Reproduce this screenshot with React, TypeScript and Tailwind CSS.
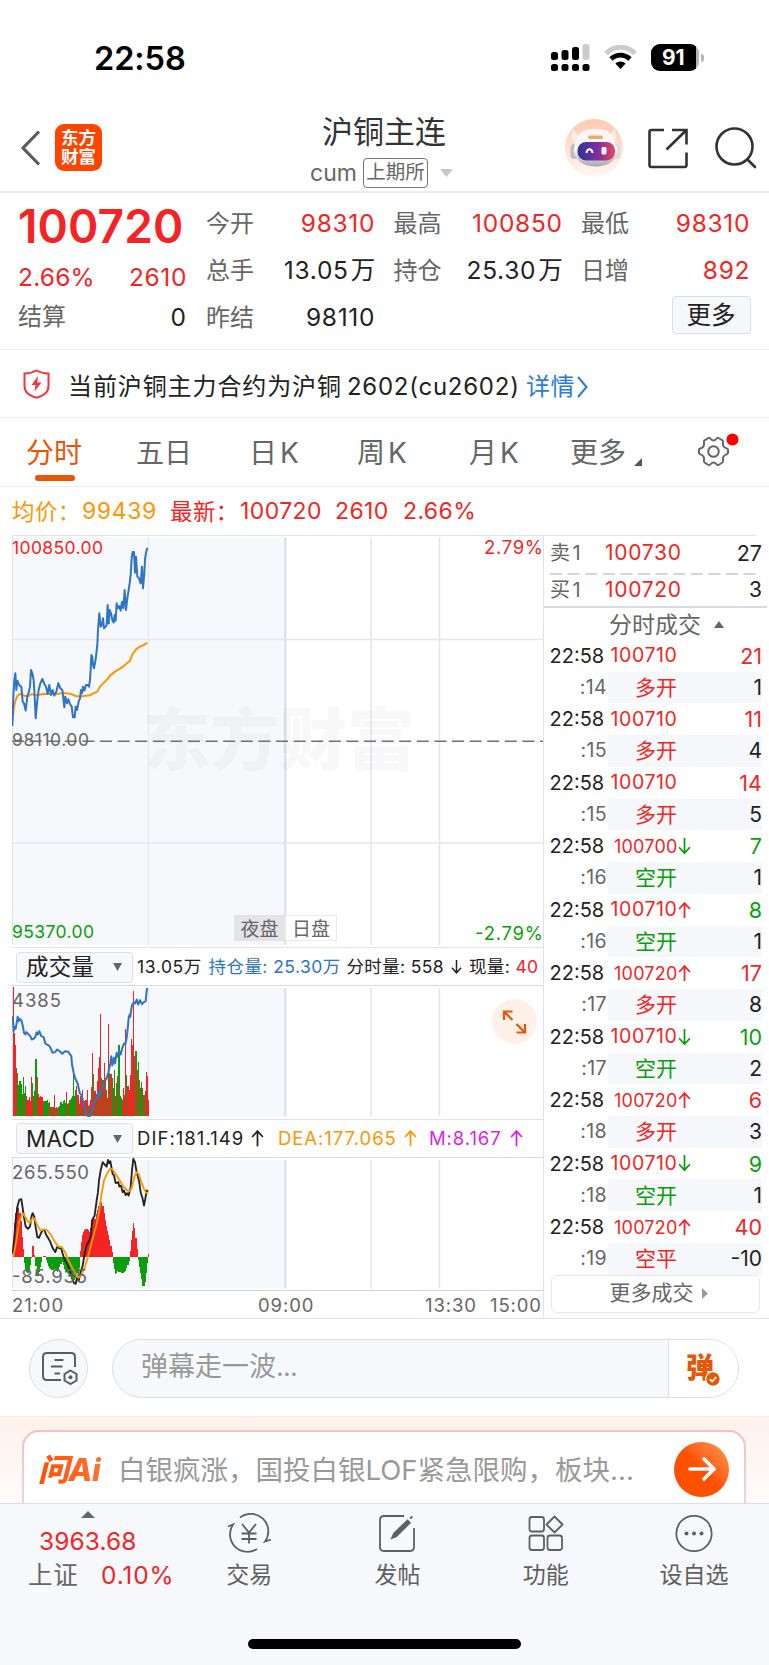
import React from 'react';

const RED = '#f52323';
const GREEN = '#0a9f0a';
const BLUE = '#2f74c5';
const ORANGE = '#ff9500';

interface Tick {
  price: string;
  arrow?: 'up' | 'down';
  small?: boolean;
  volume: number;
  side: 'up' | 'down';
  sec: string;
  kind: string;
  kindUp: boolean;
  delta: number;
}

const ticks: Tick[] = [
  { price: '100710', volume: 21, side: 'up', sec: ':14', kind: '多开', kindUp: true, delta: 1 },
  { price: '100710', volume: 11, side: 'up', sec: ':15', kind: '多开', kindUp: true, delta: 4 },
  { price: '100710', volume: 14, side: 'up', sec: ':15', kind: '多开', kindUp: true, delta: 5 },
  { price: '100700', arrow: 'down', small: true, volume: 7, side: 'down', sec: ':16', kind: '空开', kindUp: false, delta: 1 },
  { price: '100710', arrow: 'up', volume: 8, side: 'down', sec: ':16', kind: '空开', kindUp: false, delta: 1 },
  { price: '100720', arrow: 'up', small: true, volume: 17, side: 'up', sec: ':17', kind: '多开', kindUp: true, delta: 8 },
  { price: '100710', arrow: 'down', volume: 10, side: 'down', sec: ':17', kind: '空开', kindUp: false, delta: 2 },
  { price: '100720', arrow: 'up', small: true, volume: 6, side: 'up', sec: ':18', kind: '多开', kindUp: true, delta: 3 },
  { price: '100710', arrow: 'down', volume: 9, side: 'down', sec: ':18', kind: '空开', kindUp: false, delta: 1 },
  { price: '100720', arrow: 'up', small: true, volume: 40, side: 'up', sec: ':19', kind: '空平', kindUp: true, delta: -10 },
];

const quoteColumns = [
  [
    { label: '今开', value: '98310', red: true },
    { label: '总手', value: '13.05', unit: '万' },
    { label: '昨结', value: '98110' },
  ],
  [
    { label: '最高', value: '100850', red: true },
    { label: '持仓', value: '25.30', unit: '万' },
  ],
  [
    { label: '最低', value: '98310', red: true },
    { label: '日增', value: '892', red: true },
  ],
];

// Line data is kept at three units per pixel
const PRICE_LINE =
  '37,588 40,500 43,450 46,430 49,480 52,452 56,462 60,468 64,470 68,515 72,520 77,542 82,500 86,488 90,470 93,420 97,430 101,450 104,500 107,565 112,510 116,480 121,460 127,447 133,462 138,470 143,492 148,465 153,495 158,480 163,497 169,485 175,460 181,475 187,480 190,505 193,532 196,500 201,520 205,508 210,522 215,530 219,562 224,562 227,530 231,540 236,515 240,505 243,480 246,490 249,470 253,482 258,465 263,465 267,470 270,450 272,420 274,375 277,380 279,405 282,415 287,388 292,345 294,300 298,250 302,290 306,285 309,265 312,295 317,290 320,285 323,225 326,280 329,240 333,250 337,270 341,278 344,255 347,272 350,220 353,235 358,228 362,242 366,215 370,235 374,180 378,240 382,205 386,180 389,160 392,135 395,85 398,66 402,66 405,128 408,80 412,140 417,145 422,160 426,110 429,175 433,130 435,90 438,68 442,53';
const AVG_LINE =
  '37,575 42,530 47,510 53,497 60,492 68,495 76,498 85,498 95,492 105,495 115,495 130,492 150,491 170,492 190,489 210,491 220,495 230,499 245,499 270,496 280,490 292,485 300,470 312,458 322,448 330,437 345,425 365,413 378,402 390,392 398,372 408,358 420,350 432,345 442,338';
const HOLD_LINE =
  '38,230 41,275 44,262 47,268 50,250 53,232 56,245 60,238 65,245 69,262 72,280 76,285 79,278 86,285 91,290 95,300 101,298 106,292 110,278 114,285 118,275 124,290 131,293 136,312 143,316 150,322 158,340 165,338 172,330 180,336 187,343 195,335 205,337 210,345 214,350 216,375 221,400 226,418 233,432 239,460 245,468 250,488 255,510 259,528 270,530 277,510 284,488 289,478 295,458 299,470 305,448 312,430 319,418 325,400 331,372 334,350 337,378 342,355 345,372 350,340 353,352 358,335 362,345 367,325 372,312 376,315 380,295 383,270 386,235 389,225 391,232 394,208 397,195 402,188 406,192 410,180 415,195 420,182 426,194 432,188 437,185 440,155 442,145';
const DIF_LINE =
  '38,400 42,360 47,300 53,255 58,238 64,236 68,262 72,290 77,318 84,325 90,318 95,285 98,278 103,290 107,320 112,350 117,352 122,340 127,330 133,328 138,342 144,352 150,362 156,378 161,388 166,395 171,380 178,383 184,385 188,400 195,420 202,430 210,450 216,472 222,488 227,490 231,472 236,482 242,455 248,435 254,400 260,375 268,360 273,345 276,300 284,285 290,240 294,215 297,180 302,150 308,125 314,132 320,138 324,118 327,128 331,122 338,160 342,165 347,188 355,185 358,198 363,195 368,215 372,210 377,224 382,218 386,225 392,200 396,150 400,115 405,125 410,155 417,180 422,215 428,235 432,255 436,235 440,210 444,213';
const DEA_LINE =
  '40,408 50,355 57,305 64,288 70,280 76,290 83,302 90,307 98,292 104,295 112,315 122,330 132,327 142,330 152,342 165,365 175,378 186,380 195,395 205,420 218,445 228,462 235,472 245,462 256,435 268,395 278,355 290,310 298,270 304,225 312,180 322,158 330,145 336,145 345,158 358,178 370,198 382,210 390,212 396,200 403,170 410,155 416,160 424,185 432,205 438,217 444,217';

// One bar per minute, negative = green
const volumes = [
  387, 250, 215, -145, 130, -95, -107, -97, 68, -117, -70, -90, 62, 50, 58, 47, 119, -100, 62, -75,
  -172, 119, 68, 58, 60, 58, 58, -45, -45, -45, -48, 40, -42, -28, 27, 27, 64, -25, -27, 26,
  28, -30, -42, -36, -45, -48, -40, 74, -38, 40, -48, -55, -60, -132, -60, -80, 92, 65, -38, 62,
  55, 80, -50, 45, 50, 78, -30, 33, 50, 88, 190, -128, 75, -68, 105, 145, 178, 308, -115, 110,
  160, -115, 80, 55, 278, -130, 128, -115, -85, -140, 60, -100, 120, -215, -60, -55, 50, 85, 65, 263,
  -125, 90, 80, 125, 232, 215, 376, 180, -195, 140, -162, 110, -85, -102, 85, -65, 75, 133, 122, 50,
];

const macdKeys = [
  [38, 0], [44, 120], [50, 150], [58, 145], [63, 115], [67, 60], [72, 5], [74, -20], [78, -42], [86, -50], [92, -20], [95, 0],
  [97, 30], [99, 40], [102, 28], [105, 0], [108, -30], [113, -66], [118, -45], [126, -10], [130, 4], [136, 3], [139, -12],
  [148, -32], [156, -40], [165, -35], [172, -48], [180, -28], [187, -14], [194, -40], [205, -50], [214, -56], [222, -72], [230, -60], [237, -40],
  [241, 20], [247, 65], [254, 80], [262, 84], [269, 72], [277, 118], [284, 110], [292, 140], [301, 170], [308, 160], [315, 115],
  [322, 80], [330, 50], [337, 12], [340, -20], [347, -54], [354, -42], [362, -48], [368, -50], [378, -42], [387, -18], [390, 10],
  [396, 65], [402, 108], [407, 65], [413, 8], [416, -20], [422, -50], [430, -95], [436, -72], [442, -20], [445, 8],
];

function macdAt(x: number) {
  for (let i = 1; i < macdKeys.length; i++) {
    const [x0, v0] = macdKeys[i - 1];
    const [x1, v1] = macdKeys[i];
    if (x <= x1) return v0 + ((v1 - v0) * (x - x0)) / (x1 - x0);
  }
  return 8;
}

const Grid: React.FC<{ h: number }> = ({ h }) => (
  <>
    <rect x="0" y="2.5" width="273" height={h - 2.5} fill="#f7f8fb" />
    <path d={`M.5 0V${h}`} stroke="#dfe2eb" />
    <path d={`M136.5 2.5V${h}`} stroke="#e3e6ee" />
    <path d={`M273.3 2.5V${h}`} stroke="#dadde7" strokeWidth="2" />
    <path d={`M359 2.5V${h}M427.5 2.5V${h}`} stroke="#e3e6ee" strokeWidth="1.6" />
  </>
);

const PriceChart = () => (
  <svg width="531" height="409" viewBox="0 1 531 409" className="block">
    <Grid h={410} />
    <path d="M0 104.5H531M0 308H531" stroke="#e3e6ee" strokeWidth="1.5" />
    <text x="131" y="230" fontSize="68" fontWeight="900" textLength="272" fill="#000" opacity=".025">东方财富</text>
    <path d="M0 206.3H531" stroke="#707070" strokeWidth="1.4" strokeDasharray="12 5.6" />
    <g transform="translate(-12 -5) scale(.3333)" fill="none" strokeWidth="6" strokeLinejoin="round">
      <polyline points={AVG_LINE} stroke={ORANGE} />
      <polyline points={PRICE_LINE} stroke={BLUE} />
    </g>
    <text x="0" y="18.5" fontSize="17.5" textLength="91" fill={RED}>100850.00</text>
    <text x="0" y="210.5" fontSize="17.5" textLength="77" fill="#666">98110.00</text>
    <text x="0" y="403" fontSize="17.5" textLength="82" fill={GREEN}>95370.00</text>
    <text x="531" y="18.5" fontSize="18.5" textAnchor="end" textLength="59" fill={RED}>2.79%</text>
    <text x="531" y="404.5" fontSize="18.5" textAnchor="end" textLength="68" fill={GREEN}>-2.79%</text>
    <rect x="222" y="380" width="51" height="26" fill="#e4e4e6" />
    <rect x="273.5" y="380.5" width="51" height="25" fill="#fff" stroke="#ececec" />
    <text x="228.500" y="401" fontSize="19" fill="#666">夜盘</text>
    <text x="280" y="401" fontSize="19" fill="#666">日盘</text>
  </svg>
);

const VolumeChart = () => (
  <svg width="531" height="131" viewBox="0 .5 531 131" className="block">
    <Grid h={131} />
    <g transform="translate(-12 -46) scale(.3333)">
      {volumes.map((v, i) => (
        <rect key={i} x={38 + i * 3.41} y={531 - Math.abs(v)} width="3.41" height={Math.abs(v)} fill={v > 0 ? RED : GREEN} shapeRendering="crispEdges" />
      ))}
      <polyline points={HOLD_LINE} fill="none" stroke={BLUE} strokeWidth="6" strokeLinejoin="round" />
    </g>
    <text x="0" y="21" fontSize="18.500" textLength="49" fill="#666">4385</text>
    <circle cx="502.500" cy="36" r="22.500" fill="#fff1ea" />
    <path d="M492 34.500V26H500.500M492.300 26.300L500.500 34.500M504.500 47H513V38.500M512.700 46.700L504.500 38.500" fill="none" stroke="#ea5504" strokeWidth="2.200" />
  </svg>
);

const MacdChart = () => (
  <svg width="531" height="131" viewBox="0 .5 531 131" className="block">
    <Grid h={131} />
    <g transform="translate(-12 -37) scale(.3333)" fill="none" strokeLinejoin="round">
      {Array.from({ length: 120 }, (_, i) => {
        const x = 38 + i * 3.41;
        const v = macdAt(x + 1.7);
        return <rect key={i} x={x} y={v > 0 ? 409 - v : 409} width="3.41" height={Math.abs(v)} fill={v > 0 ? RED : GREEN} shapeRendering="crispEdges" />;
      })}
      <polyline points={DIF_LINE} stroke="#222" strokeWidth="5.500" />
      <polyline points={DEA_LINE} stroke={ORANGE} strokeWidth="5.500" />
    </g>
    <text x="0" y="21" fontSize="18.500" textLength="77" fill="#666">265.550</text>
    <text x="0" y="125" fontSize="18.500" textLength="75" fill="#666">-85.935</text>
  </svg>
);

const Arrow: React.FC<{ dir: 'up' | 'down'; size?: number }> = ({ dir, size = 13 }) => (
  <svg width={size} height={size * 1.25} viewBox="0 0 12 15" fill="none" stroke="currentColor" strokeWidth="1.6" className="shrink-0">
    {dir === 'up' ? <path d="M6 15V1M1 6.500L6 1L11 6.500" /> : <path d="M6 0V14M1 8.500L6 14L11 8.500" />}
  </svg>
);

const Selector: React.FC<{ label: string }> = ({ label }) => (
  <div className="flex h-[31px] w-[117px] shrink-0 items-center justify-between rounded border border-[#dcdfe8] bg-[#f7f8fb] pl-[9px] pr-2.5 text-[22.5px] tracking-[0.3px] text-[#222]">
    {label}
    <svg width="9" height="8" viewBox="0 0 9 8"><path d="M0 0H9L4.500 8Z" fill="#666" /></svg>
  </div>
);

const StatusBar = () => (
  <div className="flex h-[100px] items-start pl-[94px] pt-[38px] text-black">
    <div className="w-[457px] text-[32.5px] font-semibold leading-[41px] tracking-[-0.1px]">22:58</div>
    <svg width="39" height="28" viewBox="0 0 39 28" className="mt-1.5">
      <rect x="0" y="8" width="7" height="8" rx="2.500" />
      <rect x="10.500" y="6" width="7" height="10" rx="2.500" />
      <rect x="21" y="3" width="7" height="13" rx="2.500" />
      <rect x="31.500" y="0" width="7" height="16" rx="2.500" fill="#cbcbcb" />
      {[0, 10.5, 21, 31.5].map(x => <rect key={x} x={x} y="20" width="7" height="7" rx="2.500" />)}
    </svg>
    <svg width="33" height="25" viewBox="0 0 33 25" className="ml-3.5 mt-[7px]" fill="none">
      <path d="M2 8.500C10 .2 23 .2 31 8.500" stroke="#cbcbcb" strokeWidth="5" />
      <path d="M7 14C12.500 8.800 20.500 8.800 26 14" stroke="#000" strokeWidth="4.800" />
      <path d="M16.500 24L11.300 18.500C14 15.800 19 15.800 21.700 18.500Z" fill="#000" />
    </svg>
    <div className="ml-3.5 mt-1.5 flex h-[27px] w-[48px] items-center overflow-hidden rounded-[9px] bg-[#b5b5b5]">
      <div className="h-full w-[44.5px] bg-black text-center text-[21px] font-bold leading-[27px] text-white">91</div>
    </div>
    <div className="ml-[2px] mt-4 h-2 w-[3px] rounded-r-full bg-[#b5b5b5]" />
  </div>
);

const Robot = () => (
  <svg width="58" height="58" viewBox="0 0 58 58" className="mt-[19px]">
    <defs>
      <linearGradient id="halo" x1="0" y1="0" x2="0" y2="1">
        <stop offset="0" stopColor="#ffc9ae" />
        <stop offset="1" stopColor="#fff8f4" />
      </linearGradient>
      <linearGradient id="shell" x1="0" y1="0" x2="0" y2="1">
        <stop offset=".55" stopColor="#f8f6f7" />
        <stop offset="1" stopColor="#a9a7b4" />
      </linearGradient>
      <linearGradient id="visor" x1="0" y1="0" x2="1" y2="0">
        <stop offset="0" stopColor="#2b3597" />
        <stop offset=".55" stopColor="#7e2f9e" />
        <stop offset="1" stopColor="#e8485c" />
      </linearGradient>
    </defs>
    <circle cx="29" cy="29" r="29" fill="url(#halo)" />
    <path d="M13 17L8 10L6.500 19L9.500 24ZM44 17L50 10L51 19L48 24Z" fill="#f1eeee" />
    <rect x="5.500" y="25" width="8" height="15" rx="4" fill="#bdbac4" />
    <rect x="47" y="25" width="8" height="15" rx="4" fill="#dcdae0" />
    <path d="M30 10C41 10 47 13 49 21L53 31C53 41 43 47.500 31 47.500C18 47.500 9 41 8.500 31L11 21C14 13 20 10 30 10Z" fill="url(#shell)" />
    <rect x="23" y="16.500" width="15" height="3.500" rx="1.700" fill="#f0a76c" />
    <rect x="12.500" y="23" width="37.500" height="18.500" rx="8.500" fill="url(#visor)" />
    <path d="M21.500 34C22 29 27 29 27.500 34" fill="none" stroke="#fff" strokeWidth="2" />
    <rect x="36.500" y="28" width="5" height="7.500" rx="1.500" fill="#fff" />
  </svg>
);

const Header = () => (
  <div className="flex h-[93px] items-start border-b-2 border-[#ededed]">
    <svg width="20" height="36" viewBox="0 0 20 36" fill="none" stroke="#5c5c5c" strokeWidth="3.200" className="ml-[20px] mt-[30px]">
      <path d="M19 1.500L3 18L19 34.500" />
    </svg>
    <div className="ml-[15px] mt-6 flex h-[47px] w-[47px] flex-col items-center justify-center rounded-[9px] bg-[#ff4400] text-[17.5px] font-bold leading-[18.5px] text-white">
      <span>东方</span>
      <span>财富</span>
    </div>
    <div className="ml-[196px] flex w-[172px] flex-col items-center">
      <div className="mt-3 text-[31px] leading-[40px] text-[#333]">沪铜主连</div>
      <div className="-ml-1 mt-1.5 flex w-[144px] items-center text-[#666]">
        <span className="w-[53px] text-[23px] leading-[30px]">cum</span>
        <span className="h-[30px] w-[65px] rounded border-[1.5px] border-[#777] text-center text-[19.5px] leading-[27px]">上期所</span>
        <svg width="13" height="8" viewBox="0 0 13 8" className="ml-3"><path d="M0 0H13L6.500 8Z" fill="#c8c8c8" /></svg>
      </div>
    </div>
    <div className="ml-[95px]"><Robot /></div>
    <svg width="42" height="42" viewBox="0 0 42 42" fill="none" stroke="#333" strokeWidth="2.600" className="ml-6 mt-[27px]">
      <path d="M17 3H4.500Q2.500 3 2.500 5V38Q2.500 40 4.500 40H37.500Q39.500 40 39.500 38V25.500M25 3H39.500V17.500M39.500 3L19.500 22.500" />
    </svg>
    <svg width="42" height="43" viewBox="0 0 42 43" fill="none" stroke="#333" strokeWidth="2.600" strokeLinecap="round" className="ml-[26px] mt-[26px]">
      <circle cx="19.500" cy="20.500" r="18" />
      <path d="M32.500 33.500L40 41" />
    </svg>
  </div>
);

const Quote = () => (
  <div className="flex h-[157px] border-b-[1.5px] border-[#ebebed] pl-[18px] pt-[7px] text-[24.5px]">
    <div className="w-[168px] text-[#f52323]">
      <div className="h-[54px] text-[46px] font-semibold leading-[53px] tracking-[0.1px]">100720</div>
      <div className="flex h-[46px] justify-between leading-[46px]">
        <span className="tracking-[0.2px]">2.66%</span>
        <span className="-mr-px tracking-[0.6px]">2610</span>
      </div>
      <div className="flex h-[34px] justify-between leading-[34px]">
        <span className="text-[24px] text-[#666]">结算</span>
        <span className="text-[#222]">0</span>
      </div>
    </div>
    {quoteColumns.map((col, i) => (
      <div key={i} className={`w-[168.500px] ${i === 0 ? 'ml-[20px]' : 'ml-[19px]'}`}>
        {col.map(q => (
          <div key={q.label} className="flex h-[47px] items-center justify-between">
            <span className="text-[24px] text-[#666]">{q.label}</span>
            <span className={`-mr-[0.7px] tracking-[0.7px] ${q.red ? 'text-[#f52323]' : 'text-[#222]'}`}>
              {q.value}
              {q.unit && <span className="ml-[2px] tracking-normal">{q.unit}</span>}
            </span>
          </div>
        ))}
        {i === 2 && (
          <div className="-mr-px ml-auto mt-[2px] h-[38px] w-[79px] rounded border-[1.5px] border-[#dcdde5] bg-[#f6f7fa] text-center text-[24.5px] leading-[37px] text-[#222]">更多</div>
        )}
      </div>
    ))}
  </div>
);

const Notice = () => (
  <div className="flex h-[68px] items-center border-b-[1.5px] border-[#f2f2f4] pl-[23px] pt-1.5 text-[24px] text-[#222]">
    <svg width="27" height="30" viewBox="0 0 27 30" className="-mt-1.5">
      <path d="M13.500 1.500C17 3.500 21 4.500 25.500 4.500V17C25.500 23 20 27 13.500 28.700C7 27 1.500 23 1.500 17V4.500C6 4.500 10 3.500 13.500 1.500Z" fill="none" stroke="#f5333a" strokeWidth="2" />
      <path d="M15 7L8.500 16H12.500L11.500 22.500L18.500 13.500H14.200Z" fill="#f5333a" />
    </svg>
    <span className="ml-[18px] tracking-[0.9px]">当前沪铜主力合约为沪铜</span>
    <span className="ml-[5px] w-[175px] tracking-[0.75px]">2602(cu2602)</span>
    <span className="ml-[4px] tracking-[0.6px] text-[#2a7ae0]">详情</span>
    <svg width="11" height="22" viewBox="0 0 11 22" fill="none" stroke="#2a7ae0" strokeWidth="2" className="ml-0.5"><path d="M1 1L9.500 11L1 21" /></svg>
  </div>
);

const Tabs = () => (
  <div className="flex h-[69px] border-b-[1.5px] border-[#f0f0f2] text-[28px] leading-[70px] text-[#666]">
    <div className="ml-[26px] w-[110px] text-[#ea5504]">
      <div className="h-[57px]">分时</div>
      <div className="ml-[9px] h-1.5 w-10 rounded-full bg-[#ea5504]" />
    </div>
    <div className="w-[113px]">五日</div>
    <div className="w-[108px] tracking-[3px]">日K</div>
    <div className="w-[112px] tracking-[3px]">周K</div>
    <div className="w-[101px] tracking-[3px]">月K</div>
    <div className="flex w-[127px]">
      更多
      <svg width="8" height="8" viewBox="0 0 8 8" className="ml-2 mt-10"><path d="M8 0V8H0Z" fill="#555" /></svg>
    </div>
    <svg width="44" height="36" viewBox="0 0 44 36" fill="none" className="mt-[14px]">
      <g stroke="#666" strokeWidth="2" strokeLinejoin="round">
        <path d="M11.500 6C13 5 14 8.500 16.500 8.500S20 5 21.500 6L25.500 8.300C27 9.500 25 11.500 26.500 14.200S31 16 31 17.500V21C31 22.500 28 22 26.500 24.500S27 29.500 25.500 30.500L21.500 33C20 34 19 30.500 16.500 30.500S13 34 11.500 33L7.500 30.500C6 29.500 8 27 6.500 24.500S2 22.500 2 21V17.500C2 16 5 17 6.500 14.200S6 9.500 7.500 8.300Z" />
        <circle cx="16.500" cy="19.500" r="5.300" />
      </g>
      <circle cx="35.500" cy="7.500" r="6" fill="#ff0000" />
    </svg>
  </div>
);

const Averages = () => (
  <div className="flex h-[48px] pl-3 text-[23px] leading-[49px] tracking-[0.4px]">
    <div className="flex w-[158px] text-[#ff9500]"><span className="w-[70px] text-[22.5px]">均价：</span><span className="tracking-[0.6px]">99439</span></div>
    <div className="flex text-[#f52323]">
      <span className="w-[70px] text-[22.5px]">最新：</span>
      <span className="w-[95px]">100720</span>
      <span className="w-[68px]">2610</span>
      <span>2.66%</span>
    </div>
  </div>
);

const Charts = () => (
  <div className="w-[532px] shrink-0 border-r-[1.5px] border-[#dfe2ea]">
    <div className="h-[412px] border-t-[1.5px] border-[#dfe2ea]"><PriceChart /></div>
    <div className="flex h-[38px] items-center whitespace-nowrap border-t-[1.5px] border-[#dfe2ea] pl-1 pt-px text-[17.500px] tracking-[0.35px] text-[#222]">
      <Selector label="成交量" />
      <span className="ml-[4px] w-[71.500px] tracking-[0.6px]">13.05万</span>
      <span className="w-[138px] tracking-[0.45px] text-[#2f74c5]">持仓量: 25.30万</span>
      <span className="flex w-[122.500px] items-center gap-[7px]">分时量: 558 <Arrow dir="down" size={11} /></span>
      <span>现量: <span className="text-[#f52323]">40</span></span>
    </div>
    <div className="h-[133.500px] border-t-[1.5px] border-[#d6d9e2]"><VolumeChart /></div>
    <div className="flex h-[38px] items-center whitespace-nowrap border-t-[1.5px] border-[#dfe2ea] pl-1 pt-px text-[18.500px] tracking-[1.05px] text-[#222]">
      <Selector label="MACD" />
      <span className="ml-[4px] flex w-[141px] items-center gap-[7px]">DIF:181.149 <Arrow dir="up" /></span>
      <span className="flex w-[151px] items-center gap-[7px] tracking-[0.95px] text-[#ff9500]">DEA:177.065 <Arrow dir="up" /></span>
      <span className="flex items-center gap-2 tracking-[0.9px] text-[#dc1ee6]">M:8.167 <Arrow dir="up" /></span>
    </div>
    <div className="h-[133.500px] border-t-[1.5px] border-[#d6d9e2]"><MacdChart /></div>
    <div className="flex h-[28px] border-t-[1.5px] border-[#d0d2d8] text-[18.500px] leading-[29px] tracking-[0.9px] text-[#666]">
      <span className="w-[246px]">21:00</span>
      <span className="w-[167px]">09:00</span>
      <span className="w-[65px]">13:30</span>
      <span>15:00</span>
    </div>
  </div>
);

const Trades = () => (
  <div className="w-[225px]">
    <div className="mr-[13px] h-[38px] border-t-[1.5px] border-[#dfe2ea]">
      <div className="-mr-1.5 flex h-[34px] items-center pl-[6px] text-[21px]">
        <span className="w-[55px] text-[20px] tracking-[2.5px] text-[#666]">卖1</span>
        <span className="tracking-[0.7px] text-[#f52323]">100730</span>
        <span className="ml-auto text-[21.500px] text-[#222]">27</span>
      </div>
    </div>
    <svg width="212" height="2" className="block"><path d="M6 1H212" stroke="#d2d5de" strokeWidth="2" strokeDasharray="12 5.600" /></svg>
    <div className="mr-[2px] flex h-[33px] items-center border-b-2 border-[#d9dce5] pb-px pl-[6px] pr-[5px] text-[21px]">
      <span className="w-[55px] text-[20px] tracking-[2.5px] text-[#666]">买1</span>
      <span className="tracking-[0.7px] text-[#f52323]">100720</span>
      <span className="ml-auto text-[#222]">3</span>
    </div>
    <div className="flex h-[32px] items-center pl-[65px] pt-px text-[23px] leading-[32px] text-[#666]">
      分时成交
      <svg width="10" height="7" viewBox="0 0 10 7" className="ml-[13px]"><path d="M5 0L10 7H0Z" fill="#666" /></svg>
    </div>
    {ticks.map((t, i) => (
      <div key={i} className="pr-[7px] text-[20px]">
        <div className="flex h-[31.740px] items-center pl-[5.500px]">
          <span className="w-[57px] text-[#222]">22:58</span>
          <span className={`w-[71px] text-right text-[#f52323] ${t.small ? 'text-[18px] tracking-[0.2px]' : 'text-[19.500px] tracking-[0.6px]'}`}>{t.price}</span>
          <span className={t.arrow === 'down' ? 'text-[#0a9f0a]' : 'text-[#f52323]'}>{t.arrow && <Arrow dir={t.arrow} />}</span>
          <span className={`ml-auto text-[21.500px] ${t.side === 'up' ? 'text-[#f52323]' : 'text-[#0a9f0a]'}`}>{t.volume}</span>
        </div>
        <div className="flex h-[31.740px] items-center">
          <span className="w-[64px] pr-[1px] text-right text-[19.500px] tracking-[0.4px] text-[#666]">{t.sec}</span>
          <div className="flex h-full flex-1 items-center bg-[#f6f7fa] pl-[27px]">
            <span className={`text-[21px] ${t.kindUp ? 'text-[#f52323]' : 'text-[#0a9f0a]'}`}>{t.kind}</span>
            <span className="ml-auto text-[21px] text-[#222]">{t.delta}</span>
          </div>
        </div>
      </div>
    ))}
    <div className="ml-[7px] mt-[0.5px] flex h-[38px] w-[209px] items-center justify-center rounded-md border-[1.5px] border-[#e6e7ec] pb-0.5 pl-1.5 text-[21px] text-[#666]">
      更多成交
      <svg width="6" height="11" viewBox="0 0 6 11" className="ml-2"><path d="M0 0L6 5.500L0 11Z" fill="#999" /></svg>
    </div>
  </div>
);

const Danmu = () => (
  <div className="flex h-[96.500px] items-start pl-[29px] pt-[19.500px]">
    <div className="flex h-[59px] w-[59px] items-center justify-center rounded-full border-[1.5px] border-[#dcdee6] bg-[#f7f8fb]">
      <svg width="38" height="34" viewBox="0 0 38 34" fill="none" stroke="#5c5c5c" strokeWidth="2" className="ml-0.5">
        <path d="M20 29H6Q2 29 2 25V6Q2 2 6 2H30Q34 2 34 6V16" />
        <path d="M13.500 9H22.500M10 15.500H21.500M13.500 22.500H19" />
        <path d="M29.500 19.500L35.500 23V29.500L29.500 33L23.500 29.500V23Z" />
        <circle cx="29.500" cy="26.300" r="2" fill="#5c5c5c" stroke="none" />
      </svg>
    </div>
    <div className="ml-6 flex h-[59px] w-[627px] overflow-hidden rounded-full border-[1.5px] border-[#dcdee6] bg-[#f7f8fb]">
      <div className="flex-1 pl-[28px] text-[27px] leading-[53px] text-[#999]">弹幕走一波<span className="tracking-[-0.8px]">...</span></div>
      <div className="flex w-[70px] items-center border-l-[1.5px] border-[#dcdee6] bg-white pl-[17px]">
        <div className="relative text-[28px] font-black leading-[34px] text-[#ea5504]">
          弹
          <svg width="16" height="16" viewBox="0 0 16 16" className="absolute -bottom-[2px] -right-[7px]">
            <circle cx="8" cy="8" r="7.300" fill="#ea5504" stroke="#fff" strokeWidth="1.300" />
            <path d="M4.800 8.200L7.200 10.500L11.300 6" fill="none" stroke="#fff" strokeWidth="1.700" />
          </svg>
        </div>
      </div>
    </div>
  </div>
);

const AskAi = () => (
  <div className="h-[87px] overflow-hidden border-t border-[#f0eced] bg-gradient-to-b from-[#fff1ec] to-[#fffbfa] pl-[22px] pr-[23px] pt-[13px]">
    <div className="h-[96px] rounded-[17px] bg-gradient-to-b from-[#ffbdb4] to-[#dcdcf5] p-[2px]">
      <div className="flex h-full rounded-[15px] bg-white pl-[14px]">
        <div className="w-[80px] bg-gradient-to-r from-[#ff4e00] to-[#ff7a35] bg-clip-text text-[31px] font-extrabold italic leading-[76px] tracking-[-0.5px] text-transparent">问Ai</div>
        <div className="w-[538px] whitespace-nowrap text-[27.500px] leading-[77px] text-[#999]">白银疯涨，国投白银LOF紧急限购，板块...</div>
        <div className="ml-[18px] mt-[10px] flex h-[55px] w-[55px] items-center justify-center rounded-full bg-gradient-to-tr from-[#ff5000] from-50% to-[#ff9a4a]">
          <svg width="28" height="26" viewBox="0 0 28 26" fill="none" stroke="#fff" strokeWidth="3.600" strokeLinecap="round" strokeLinejoin="round">
            <path d="M2 13H26M16 3L26 13L16 23" />
          </svg>
        </div>
      </div>
    </div>
  </div>
);

const navItems = [
  {
    label: '交易',
    icon: (
      <>
        <path d="M13 4.500A17.500 17.500 0 0 1 38 28.500L44 26.500M30 36A17.500 17.500 0 0 1 6 11.500L1 13.500" />
        <path d="M15 11L22 19.500L29 11M14.500 20.500H29.500M14.500 26H29.500M22 19.500V30.500" />
      </>
    ),
  },
  {
    label: '发帖',
    icon: (
      <>
        <path d="M29 3H9Q5 3 5 7V34Q5 38 9 38H35Q39 38 39 34V15" />
        <path d="M17 25L19 20.500L32.500 7.500L34.800 9.800L21 23.500ZM35 5.500L37.500 3.500" fill="#5f5f5f" />
      </>
    ),
  },
  {
    label: '功能',
    icon: (
      <>
        <rect x="5.500" y="4" width="14.500" height="14.500" rx="2.500" />
        <rect x="5.500" y="22.500" width="14.500" height="14.500" rx="2.500" />
        <rect x="23.500" y="22.500" width="14.500" height="14.500" rx="2.500" />
        <path d="M30.500 3.500L38.500 11.500L30.500 19.500L22.500 11.500Z" strokeLinejoin="round" />
      </>
    ),
  },
  {
    label: '设自选',
    icon: (
      <>
        <circle cx="22" cy="20.500" r="17.700" />
        <g fill="#5f5f5f" stroke="none"><circle cx="14.500" cy="20.500" r="2" /><circle cx="22" cy="20.500" r="2" /><circle cx="29.500" cy="20.500" r="2" /></g>
      </>
    ),
  },
];

const BottomNav = () => (
  <div className="h-[162.500px] border-t-[1.5px] border-[#dcdde6] bg-[#f7f8fb]">
    <div className="flex h-[135px]">
      <div className="w-[175px] pl-[28px] text-[24.500px] text-[#f52323]">
        <svg width="14" height="7" viewBox="0 0 14 7" className="ml-[53px] mt-[7px] block"><path d="M7 0L14 7H0Z" fill="#666" /></svg>
        <div className="mt-[7px] pl-[11px] leading-[32px] tracking-[0.1px]">3963.68</div>
        <div className="mt-[2px] flex leading-[33px] tracking-[0.8px]"><span className="w-[73px] text-[#666]">上证</span>0.10%</div>
      </div>
      {navItems.map(n => (
        <div key={n.label} className="flex w-[148.300px] flex-col items-center pt-[9px] text-[23px] text-[#5f5f5f]">
          <svg width="44" height="41" viewBox="0 0 44 41" fill="none" stroke="#5f5f5f" strokeWidth="1.800">{n.icon}</svg>
          <span className="mt-[5px] leading-[33px]">{n.label}</span>
        </div>
      ))}
    </div>
    <div className="mx-auto h-[10px] w-[273px] rounded-full bg-black" />
  </div>
);

export default function App() {
  return (
    <div className="h-[1665px] w-[769px] overflow-hidden bg-white font-['Inter','Noto_Sans_CJK_SC',sans-serif]">
      <StatusBar />
      <Header />
      <Quote />
      <Notice />
      <Tabs />
      <Averages />
      <div className="flex h-[784px] border-b-[1.5px] border-[#dfe2ea] pl-3">
        <Charts />
        <Trades />
      </div>
      <Danmu />
      <AskAi />
      <BottomNav />
    </div>
  );
}
